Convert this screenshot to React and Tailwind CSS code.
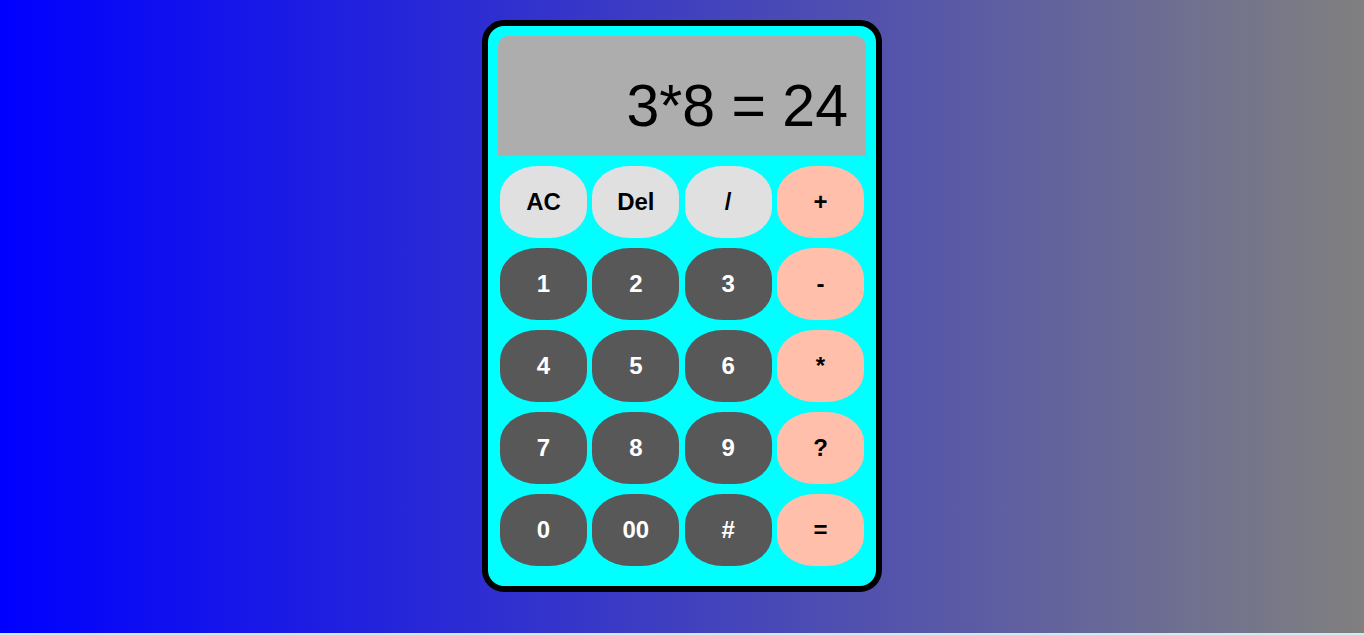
import React from 'react';

const keys = [
  { label: 'AC', kind: 'light' },
  { label: 'Del', kind: 'light' },
  { label: '/', kind: 'light' },
  { label: '+', kind: 'op' },
  { label: '1', kind: 'dark' },
  { label: '2', kind: 'dark' },
  { label: '3', kind: 'dark' },
  { label: '-', kind: 'op' },
  { label: '4', kind: 'dark' },
  { label: '5', kind: 'dark' },
  { label: '6', kind: 'dark' },
  { label: '*', kind: 'op' },
  { label: '7', kind: 'dark' },
  { label: '8', kind: 'dark' },
  { label: '9', kind: 'dark' },
  { label: '?', kind: 'op' },
  { label: '0', kind: 'dark' },
  { label: '00', kind: 'dark' },
  { label: '#', kind: 'dark' },
  { label: '=', kind: 'op' },
];

const styles = {
  light: 'bg-[#e0e0e0] text-black',
  dark: 'bg-[#585858] text-white',
  op: 'bg-[#ffbfaa] text-black',
};

export default function App() {
  return (
    <div className="bg-[#cdeef0] min-h-[635px] font-['Liberation_Sans',Arial,sans-serif]">
      <div className="h-[633px] bg-[linear-gradient(to_right,#0000ff,#808080)] pt-[20px] flex justify-center">
        <div className="w-[400px] h-[572px] border-[6px] border-black rounded-[22px] bg-[#00ffff] px-[10px] pt-[10px] pb-[20px]">
          {/* display */}
          <div className="h-[120px] bg-[#adadad] rounded-t-[10px] flex items-end justify-end pr-[18px] pb-[20px]">
            <span className="text-[59px] leading-none text-black">3*8 = 24</span>
          </div>

          {/* keypad */}
          <div className="mt-[10px] pl-[2px] grid grid-cols-[repeat(4,87px)] gap-x-[5.33px] gap-y-[10px]">
            {keys.map((k) => (
              <button
                key={k.label}
                className={`h-[72px] w-[87px] rounded-[38px/30px] text-[24px] font-bold flex items-center justify-center ${styles[k.kind]}`}
              >
                {k.label}
              </button>
            ))}
          </div>
        </div>
      </div>
    </div>
  );
}
